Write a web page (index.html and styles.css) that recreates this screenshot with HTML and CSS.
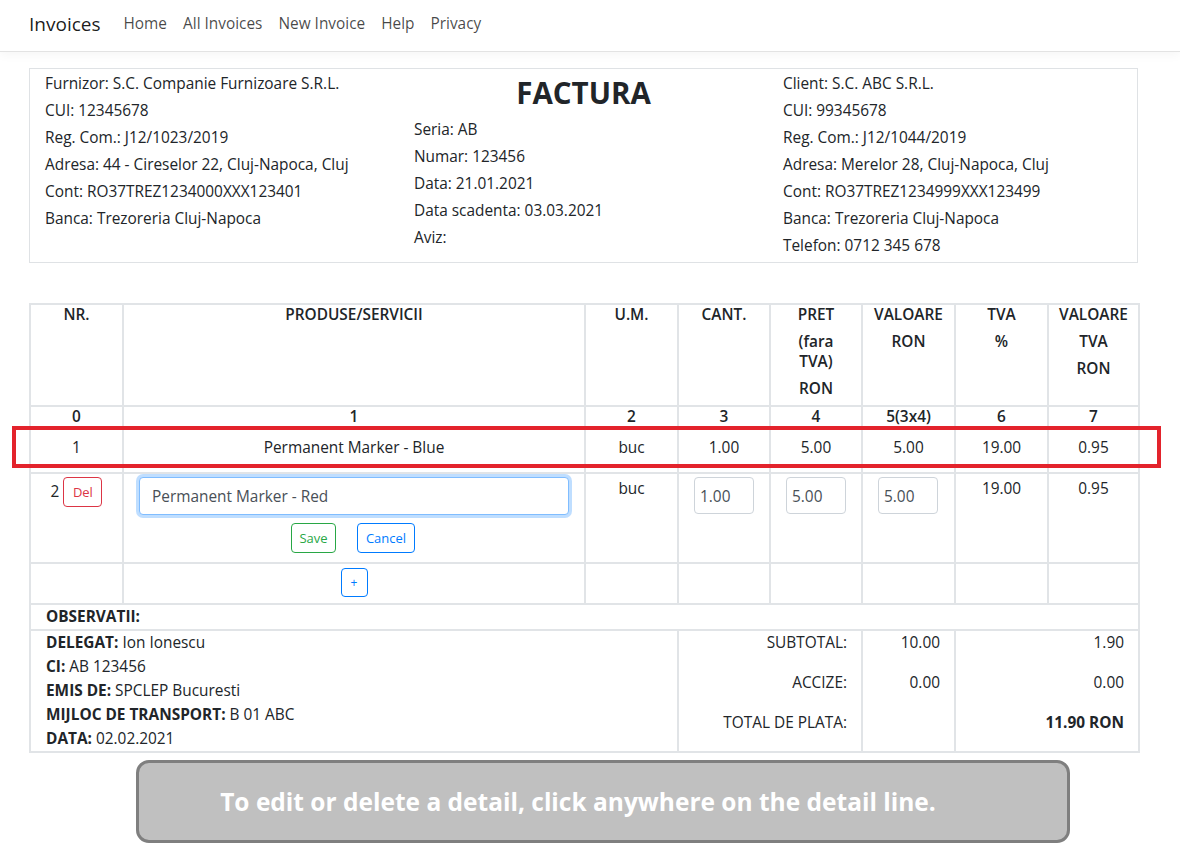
FILE: index.html
```html
<!DOCTYPE html>
<html lang="ro">
<head>
<meta charset="utf-8">
<title>Invoices</title>
<link rel="stylesheet" href="styles.css">
</head>
<body>
<header class="navbar">
  <span class="brand">Invoices</span>
  <nav class="nav">
    <a href="#">Home</a>
    <a href="#">All Invoices</a>
    <a href="#">New Invoice</a>
    <a href="#">Help</a>
    <a href="#">Privacy</a>
  </nav>
</header>

<main class="page">
  <section class="info">
    <div class="info-col">
      <div class="ln">Furnizor: S.C. Companie Furnizoare S.R.L.</div>
      <div class="ln">CUI: 12345678</div>
      <div class="ln">Reg. Com.: J12/1023/2019</div>
      <div class="ln">Adresa: 44 - Cireselor 22, Cluj-Napoca, Cluj</div>
      <div class="ln">Cont: RO37TREZ1234000XXX123401</div>
      <div class="ln">Banca: Trezoreria Cluj-Napoca</div>
    </div>
    <div class="info-col">
      <h1 class="title">FACTURA</h1>
      <div class="ln">Seria: AB</div>
      <div class="ln">Numar: 123456</div>
      <div class="ln">Data: 21.01.2021</div>
      <div class="ln">Data scadenta: 03.03.2021</div>
      <div class="ln">Aviz:</div>
    </div>
    <div class="info-col">
      <div class="ln">Client: S.C. ABC S.R.L.</div>
      <div class="ln">CUI: 99345678</div>
      <div class="ln">Reg. Com.: J12/1044/2019</div>
      <div class="ln">Adresa: Merelor 28, Cluj-Napoca, Cluj</div>
      <div class="ln">Cont: RO37TREZ1234999XXX123499</div>
      <div class="ln">Banca: Trezoreria Cluj-Napoca</div>
      <div class="ln">Telefon: 0712 345 678</div>
    </div>
  </section>

  <div class="table-wrap">
    <table class="inv">
      <colgroup>
        <col class="c-nr"><col class="c-prod"><col class="c-um"><col class="c-cant">
        <col class="c-pret"><col class="c-val"><col class="c-tva"><col class="c-vtva">
      </colgroup>
      <thead>
        <tr class="head">
          <th><div class="hl">NR.</div></th>
          <th><div class="hl">PRODUSE/SERVICII</div></th>
          <th><div class="hl">U.M.</div></th>
          <th><div class="hl">CANT.</div></th>
          <th><div class="hl">PRET</div><div class="hl">(fara<br>TVA)</div><div class="hl">RON</div></th>
          <th><div class="hl">VALOARE</div><div class="hl">RON</div></th>
          <th><div class="hl">TVA</div><div class="hl">%</div></th>
          <th><div class="hl">VALOARE</div><div class="hl">TVA</div><div class="hl">RON</div></th>
        </tr>
        <tr class="nums">
          <th>0</th><th>1</th><th>2</th><th>3</th><th>4</th><th>5(3x4)</th><th>6</th><th>7</th>
        </tr>
      </thead>
      <tbody>
        <tr class="row">
          <td>1</td><td>Permanent Marker - Blue</td><td>buc</td><td>1.00</td><td>5.00</td><td>5.00</td><td>19.00</td><td>0.95</td>
        </tr>
        <tr class="row edit">
          <td class="nr-cell"><span class="nr">2</span><button class="btn btn-red">Del</button></td>
          <td class="prod-cell">
            <input class="field field-focus" type="text" value="Permanent Marker - Red">
            <div class="actions">
              <button class="btn btn-green">Save</button>
              <button class="btn btn-blue">Cancel</button>
            </div>
          </td>
          <td class="txt">buc</td>
          <td class="num-cell"><input class="field small" type="text" value="1.00"></td>
          <td class="num-cell"><input class="field small" type="text" value="5.00"></td>
          <td class="num-cell"><input class="field small" type="text" value="5.00"></td>
          <td class="txt">19.00</td>
          <td class="txt">0.95</td>
        </tr>
        <tr class="add">
          <td></td><td><button class="btn btn-blue btn-plus">+</button></td><td></td><td></td><td></td><td></td><td></td><td></td>
        </tr>
        <tr class="obs">
          <td colspan="8"><b>OBSERVATII:</b></td>
        </tr>
        <tr class="foot">
          <td colspan="3" class="deleg">
            <div><b>DELEGAT:</b> Ion Ionescu</div>
            <div><b>CI:</b> AB 123456</div>
            <div><b>EMIS DE:</b> SPCLEP Bucuresti</div>
            <div><b>MIJLOC DE TRANSPORT:</b> B 01 ABC</div>
            <div><b>DATA:</b> 02.02.2021</div>
          </td>
          <td colspan="2" class="tot">
            <div>SUBTOTAL:</div>
            <div>ACCIZE:</div>
            <div>TOTAL DE PLATA:</div>
          </td>
          <td class="tot">
            <div>10.00</div>
            <div>0.00</div>
            <div>&nbsp;</div>
          </td>
          <td colspan="2" class="tot">
            <div>1.90</div>
            <div>0.00</div>
            <div><b>11.90 RON</b></div>
          </td>
        </tr>
      </tbody>
    </table>
    <div class="highlight"></div>
  </div>

  <div class="banner">To edit or delete a detail, click anywhere on the detail line.</div>
</main>
</body>
</html>
```

FILE: styles.css
```css
* { box-sizing: border-box; }
html, body { margin: 0; padding: 0; background: #fff; }
body {
  font-family: "Open Sans", "Noto Sans", sans-serif;
  font-size: 15.4px;
  color: #212529;
}

.navbar {
  height: 52px;
  display: flex;
  align-items: center;
  padding: 0 29px;
  border-bottom: 1px solid #e3e3e3;
  box-shadow: 0 3px 10px rgba(0,0,0,0.04);
}
.brand {
  font-size: 19px;
  color: rgba(0,0,0,0.9);
  margin-right: 15px;
  margin-top: -4px;
}
.nav { display: flex; margin-top: -4px; }
.nav a {
  color: rgba(0,0,0,0.72);
  text-decoration: none;
  padding: 0 8px;
  font-size: 15.4px;
}

.page {
  width: 1109px;
  margin: 16px 0 0 29px;
}

.info {
  display: grid;
  grid-template-columns: 369px 369px 369px;
  border: 1px solid #dfe2e5;
  padding: 1px 0 3px 0;
}
.info-col { padding: 0 15px; }
.ln { line-height: 27px; white-space: nowrap; }
.title {
  margin: 0;
  text-align: center;
  font-size: 29.5px;
  font-weight: 700;
  line-height: 46px;
  color: #212529;
}

.table-wrap {
  position: relative;
  margin-top: 40px;
}
.inv {
  width: 1109px;
  table-layout: fixed;
  border-collapse: collapse;
  font-size: 15.4px;
}
.c-nr { width: 93px; }
.c-prod { width: 462px; }
.c-um { width: 93px; }
.c-cant { width: 92px; }
.c-pret { width: 92px; }
.c-val { width: 93px; }
.c-tva { width: 93px; }
.c-vtva { width: 91px; }

.inv th, .inv td {
  border: 2px solid #e1e4e7;
  text-align: center;
  vertical-align: top;
}
.head th {
  font-weight: 600;
  padding: 0 2px 0;
}
.hl { line-height: 20px; margin-bottom: 7px; }
.hl:last-child { margin-bottom: 6px; }
.nums th {
  font-weight: 600;
  line-height: 20px;
  padding: 0 2px 0;
}
.row td { padding: 8px 2px 14px; line-height: 21px; }

.edit td { padding: 3px 2px 9px; }
.edit td.txt { padding-top: 4px; line-height: 21px; }
.nr-cell { white-space: nowrap; }
.nr { margin-right: 4px; }
.prod-cell { padding-left: 15px !important; padding-right: 15px !important; }
.num-cell { padding-left: 15px !important; padding-right: 15px !important; text-align: left !important; }

.field {
  display: block;
  font-family: inherit;
  font-size: 15.4px;
  color: #495057;
  border: 1px solid #ced4da;
  border-radius: 4px;
  background: #fff;
  padding: 0 12px;
  height: 38px;
  width: 100%;
  outline: none;
}
.field-focus {
  border-color: #80bdff;
  box-shadow: 0 0 0 3px rgba(0,123,255,0.25);
}
.field.small {
  width: 60px;
  height: 37px;
  padding: 2px 5px 0;
  font-size: 15.4px;
}

.actions {
  display: flex;
  justify-content: center;
  gap: 21px;
  margin-top: 8px;
  padding-right: 2px;
}
.btn {
  font-family: inherit;
  font-size: 13px;
  background: #fff;
  border: 1px solid;
  border-radius: 4px;
  height: 30px;
  padding: 0 8px;
  line-height: 28px;
  cursor: pointer;
}
.btn-red { color: #dc3545; border-color: #dc3545; }
.btn-green { color: #28a745; border-color: #28a745; width: 45px; padding: 0; }
.btn-blue { color: #007bff; border-color: #007bff; }
.btn-red { width: 39px; padding: 0; }
.edit .btn-blue { width: 58px; padding: 0; }
.btn-plus { width: 27px; height: 29px; padding: 0; line-height: 26px; font-size: 12px; }
.add td { height: 41px; padding: 4px 2px 4px; }

.obs td {
  text-align: left;
  padding: 1px 15px 2px;
  line-height: 21px;
}
.obs b, .foot b { font-weight: 700; }

.foot td { vertical-align: top; }
.deleg {
  text-align: left !important;
  padding: 0 15px 0;
}
.deleg div { line-height: 24px; }
.tot {
  text-align: right !important;
  padding: 0 14px 0;
}
.tot div { line-height: 24px; margin-bottom: 16px; white-space: nowrap; }
.tot div:last-child { margin-bottom: 0; }

.highlight {
  position: absolute;
  left: -17px;
  top: 123px;
  width: 1149px;
  height: 42px;
  border: 4px solid #e3232c;
  pointer-events: none;
}

.banner {
  margin: 7px 0 0 107px;
  width: 934px;
  height: 83px;
  padding-right: 50px;
  background: #c0c0c0;
  border: 3px solid #7f7f7f;
  border-radius: 13px;
  color: #fff;
  font-weight: 700;
  font-size: 24.5px;
  display: flex;
  align-items: center;
  justify-content: center;
}
```
